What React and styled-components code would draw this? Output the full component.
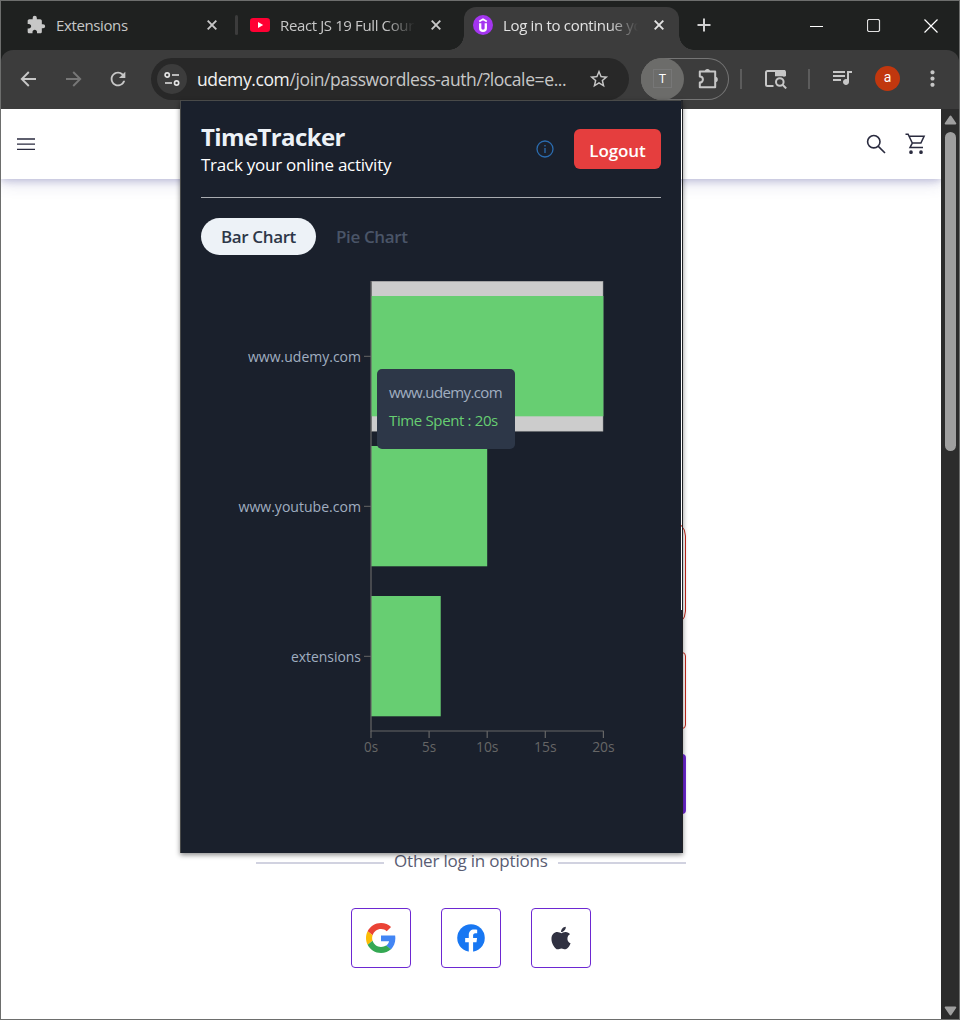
import React from "react";
import styled, { createGlobalStyle } from "styled-components";
import { MdExtension, MdStarBorder, MdRefresh, MdQueueMusic, MdMoreVert } from "react-icons/md";
import { FaApple } from "react-icons/fa";

const GlobalStyle = createGlobalStyle`
  * { box-sizing: border-box; }
  body { margin: 0; font-family: "Open Sans", "Noto Sans", sans-serif; font-stretch: 92%; }
  button { font: inherit; border: 0; padding: 0; background: none; }
  svg { display: block; flex: none; }
`;

const Window = styled.div`
  position: relative;
  width: 960px;
  height: 1020px;
  border: 1px solid #6d6e6d;
  background: #1f2120;
  display: flex;
  flex-direction: column;
  overflow: hidden;
`;

/* ---------- Tab strip ---------- */
const TabStrip = styled.div`
  display: flex;
  align-items: flex-end;
  height: 49px;
  flex: none;
`;

const Tab = styled.div`
  position: relative;
  display: flex;
  align-items: center;
  height: 43px;
  width: ${(p) => p.$width}px;
  padding: 0 ${(p) => p.$right}px 8px ${(p) => p.$left}px;
  color: ${(p) => (p.$active ? "#e3e3e3" : "#c7c7c7")};
  background: ${(p) => (p.$active ? "#3c3c3c" : "transparent")};
  border-radius: 12px 12px 0 0;
`;

const TabFoot = styled.i`
  position: absolute;
  bottom: 0;
  width: 15px;
  height: 15px;
  ${(p) => (p.$side === "left" ? "left: -15px;" : "right: -15px;")}
  background: radial-gradient(circle at ${(p) => (p.$side === "left" ? "0 0" : "100% 0")}, transparent 14.5px, #3c3c3c 15px);
`;

const TabTitle = styled.span`
  flex: 1;
  margin: 0 ${(p) => (p.$fade ? 16 : 0)}px 0 ${(p) => p.$gap}px;
  font-size: 15px;
  letter-spacing: ${(p) => p.$track || -0.4}px;
  line-height: 20px;
  white-space: nowrap;
  overflow: hidden;
  ${(p) => p.$fade && "mask-image: linear-gradient(90deg, #000 78%, transparent 100%);"}
`;

const TabDivider = styled.i`
  width: 3px;
  height: 20px;
  margin-bottom: 15px;
  border-radius: 2px;
  background: #3c3c3c;
`;

const NewTab = styled.div`
  height: 43px;
  margin-left: 18px;
  padding-top: 11px;
`;

const WindowControls = styled.div`
  display: flex;
  align-items: center;
  gap: 43px;
  margin-left: auto;
  padding: 0 21px 17px 0;
`;

/* ---------- Toolbar ---------- */
const Toolbar = styled.div`
  display: flex;
  align-items: center;
  height: 59px;
  flex: none;
  padding: 0 0 2px 18px;
  background: #3c3c3c;
  border-radius: 12px 12px 0 0;
  color: #c7c7c7;
  & > * { flex-shrink: 0; }
`;

const NavIcons = styled.div`
  display: flex;
  align-items: center;
  gap: 24px;
  width: 132px;
`;

const Omnibox = styled.div`
  display: flex;
  align-items: center;
  width: 478px;
  height: 42px;
  padding: 0 19px 0 6px;
  border-radius: 21px;
  background: #282828;
`;

const SiteChip = styled.div`
  display: grid;
  place-items: center;
  width: 30px;
  height: 30px;
  border-radius: 50%;
  background: #3c3c3c;
`;

const Url = styled.span`
  flex: 1;
  margin-left: 10px;
  font-size: 17.5px;
  letter-spacing: -0.39px;
  white-space: nowrap;
  color: #c7c7c7;
  b { font-weight: 400; color: #f1f1f1; }
`;

const ExtensionPill = styled.div`
  display: flex;
  align-items: center;
  width: 88px;
  height: 42px;
  margin-left: 12px;
  border-radius: 21px;
  box-shadow: inset 0 0 0 1px #757575;
`;

const ActiveExtension = styled.div`
  display: grid;
  place-items: center;
  width: 43px;
  height: 42px;
  margin-right: 14px;
  border-radius: 50%;
  background: #6c6c6a;
`;

const LetterTile = styled.span`
  display: grid;
  place-items: center;
  width: 19px;
  height: 19px;
  border: 1px solid #777;
  font-family: "Liberation Sans", sans-serif;
  font-size: 12px;
  color: #fff;
`;

const ToolbarDivider = styled.i`
  width: 2px;
  height: 20px;
  margin-left: ${(p) => p.$gap}px;
  background: #5c5c5c;
`;

const IconSlot = styled.span`
  margin-left: ${(p) => p.$left}px;
  padding-bottom: ${(p) => p.$lift || 0}px;
`;

const Avatar = styled.div`
  width: 25px;
  height: 25px;
  margin: 0 20px 0 21px;
  border-radius: 50%;
  background: #c1370e;
  color: #fff;
  font: 14px/23px Roboto, sans-serif;
  text-align: center;
`;

/* ---------- Web page ---------- */
const Viewport = styled.div`
  display: flex;
  flex: 1;
  background: #fff;
`;

const Site = styled.main`
  flex: 1;
  display: flex;
  flex-direction: column;
  overflow: hidden;
`;

const SiteHeader = styled.header`
  display: flex;
  align-items: center;
  gap: 19px;
  height: 70px;
  flex: none;
  padding: 0 15px 0 16px;
  background: #fff;
  color: #2a2b3f;
  box-shadow: 0 2px 7px rgba(60, 60, 140, 0.25), 0 5px 15px rgba(60, 60, 140, 0.14);
  svg:first-child { margin-right: auto; }
`;

const LoginForm = styled.section`
  display: flex;
  flex-direction: column;
  width: 430px;
  margin: 341px 0 0 255px;
  & > * { flex-shrink: 0; }
`;

const ErrorBox = styled.div`
  height: 107px;
  border: 1px solid #c5281c;
  border-radius: 16px;
`;

const Field = styled.div`
  height: 77px;
  margin-top: 25px;
  border: 1px solid #c5281c;
  border-radius: 4px;
`;

const Submit = styled.div`
  height: 60px;
  margin-top: 25px;
  border-radius: 4px;
  background: #6d28d2;
`;

const OptionsRule = styled.div`
  display: flex;
  align-items: center;
  gap: 10px;
  height: 24px;
  margin-top: 37px;
  color: #595c73;
  font-size: 17px;
  white-space: nowrap;
  &::before, &::after { content: ""; flex: 1; height: 2px; background: #d1d2e0; }
  span { width: 154px; margin-top: -6px; letter-spacing: -0.2px; }
`;

const Providers = styled.div`
  display: flex;
  justify-content: center;
  gap: 30px;
  margin-top: 33px;
`;

const Provider = styled.button`
  display: grid;
  place-items: center;
  width: 60px;
  height: 60px;
  border: 1px solid #6d28d2;
  border-radius: 4px;
  color: #303141;
`;

const Scrollbar = styled.aside`
  display: flex;
  flex-direction: column;
  align-items: center;
  width: 18px;
  padding: 6px 0 3px 1px;
  background: #2c2c2c;
`;

const Thumb = styled.div`
  width: 11px;
  height: 319px;
  margin: 7px 0 auto;
  border-radius: 6px;
  background: #9f9f9f;
`;

/* ---------- Extension popup ---------- */
const Popup = styled.div`
  position: absolute;
  left: 179px;
  top: 99px;
  display: flex;
  width: 503px;
  height: 753px;
  box-shadow: 0 2px 5px rgba(0, 0, 0, 0.45);
`;

const PopupPanel = styled.section`
  display: flex;
  flex-direction: column;
  width: 501px;
  padding: 20px;
  border: solid #494a49;
  border-width: 1px 0 0 1px;
  background: #1a202c;
  color: #edf2f7;
`;

const PopupEdge = styled.div`
  width: 2px;
  border-right: 1px solid #202125;
  border-top: 9px solid #26282c;
  display: flex;
  align-items: flex-end;
  &::after { content: ""; flex: 1; height: 243px; background: #1a202c; }
`;

const PopupHeader = styled.header`
  display: flex;
  align-items: center;
  height: 77px;
  padding-bottom: 21px;
  border-bottom: 1px solid #a9acb1;
`;

const Heading = styled.div`
  flex: 1;
  h1 { margin: 2px 0 0; font-size: 24px; line-height: 30px; letter-spacing: -0.62px; font-weight: 700; }
  p { margin: 0; font-size: 17px; line-height: 26px; letter-spacing: -0.25px; white-space: nowrap; color: #fff; }
`;

const Logout = styled.button`
  width: 87px;
  height: 40px;
  margin-left: 20px;
  border-radius: 6px;
  background: #e53e3e;
  color: #fff;
  font-size: 17px;
  font-weight: 600;
  letter-spacing: -0.1px;
  padding-top: 4px;
`;

const ChartTabs = styled.nav`
  display: flex;
  margin: 20px 0 26px;
`;

const ChartTab = styled.button`
  height: 37px;
  padding: 0 20px;
  border-radius: 19px;
  font-size: 17px;
  font-weight: 600;
  white-space: nowrap;
  letter-spacing: -0.38px;
  width: ${(p) => p.$width}px;
  background: ${(p) => (p.$active ? "#edf2f7" : "transparent")};
  color: ${(p) => (p.$active ? "#2d3748" : "#4a5568")};
`;

const ChartArea = styled.div`
  position: relative;
  text { font-size: 15px; }
`;

const Tooltip = styled.div`
  position: absolute;
  left: 176px;
  top: 88px;
  width: 138px;
  height: 80px;
  padding: 9px 12px;
  border-radius: 5px;
  background: #2d3748;
  color: #a0aec0;
  font-size: 15px;
  line-height: 28px;
  white-space: nowrap;
  p { margin: 0; letter-spacing: -0.62px; }
  p + p { color: #67ce72; letter-spacing: -0.36px; }
`;

/* ---------- Drawings ---------- */
const Stroke = ({ w, h = w, d, width = 2, ...rest }) => (
  <svg width={w} height={h} viewBox={`0 0 ${w} ${h}`} fill="none" stroke="currentColor" strokeWidth={width} {...rest}>
    <path d={d} />
  </svg>
);

const CloseIcon = () => <Stroke w={10} d="M.7.7l8.6 8.6M9.3.7L.7 9.3" width={1.9} />;

const YouTube = () => (
  <svg width="20" height="14" viewBox="0 0 20 14">
    <rect width="20" height="14" rx="3.2" fill="#ff0033" />
    <path d="M8 4l5.2 3L8 10z" fill="#fff" />
  </svg>
);

const Udemy = () => (
  <svg width="20" height="20" viewBox="0 0 20 20" fill="none" stroke="#fff">
    <circle cx="10" cy="10" r="10" fill="#a435f0" stroke="none" />
    <path d="M6.2 6.4L10 4.2l3.8 2.2" strokeWidth="1.7" />
    <path d="M7.2 8.2v5a2.8 2.6 0 0 0 5.6 0v-5" strokeWidth="2.3" />
  </svg>
);

const TuneIcon = () => (
  <svg width="16" height="14" viewBox="0 0 16 14" fill="none" stroke="#e3e3e3" strokeWidth="1.7">
    <circle cx="3.2" cy="3" r="2.1" />
    <path d="M8 3h7M1 11h7" />
    <circle cx="12.6" cy="11" r="2.1" />
  </svg>
);

const PuzzleOutline = () => (
  <svg width="22" height="22" viewBox="0 0 22 22" fill="none" stroke="currentColor" strokeWidth="2" strokeLinejoin="round">
    <path d="M1.8 3.6h15.4v15.6H1.8v-4.6a3.1 3.1 0 0 0 0-6.2z" />
    <path d="M6.8 3.6a2.6 2.6 0 0 1 5.2 0zM17.2 8.8a2.6 2.6 0 0 1 0 5.2z" fill="currentColor" stroke="none" />
  </svg>
);

const SidePanelSearch = () => (
  <svg width="23" height="20" viewBox="0 0 23 20" fill="none" stroke="currentColor" strokeWidth="2">
    <path d="M9.5 17H3.5A1.5 1.5 0 0 1 2 15.5v-12A1.5 1.5 0 0 1 3.5 2H20v5.5" />
    <path d="M11 1h9a2 2 0 0 1 2 2v4.2H11z" fill="currentColor" stroke="none" />
    <circle cx="15.8" cy="13" r="3.8" />
    <path d="M18.6 15.8l3.6 3.6" />
  </svg>
);

const Google = () => (
  <svg width="30" height="30" viewBox="0 0 48 48">
    <path fill="#EA4335" d="M24 9.5c3.54 0 6.71 1.22 9.21 3.6l6.85-6.85C35.9 2.38 30.47 0 24 0 14.62 0 6.51 5.38 2.56 13.22l7.98 6.19C12.43 13.72 17.74 9.5 24 9.5z" />
    <path fill="#4285F4" d="M46.98 24.55c0-1.57-.15-3.09-.38-4.55H24v9.02h12.94c-.58 2.96-2.26 5.48-4.78 7.18l7.73 6c4.51-4.18 7.09-10.36 7.09-17.65z" />
    <path fill="#FBBC05" d="M10.53 28.59c-.48-1.45-.76-2.99-.76-4.59s.27-3.14.76-4.59l-7.98-6.19C.92 16.46 0 20.12 0 24c0 3.88.92 7.54 2.56 10.78l7.97-6.19z" />
    <path fill="#34A853" d="M24 48c6.48 0 11.93-2.13 15.89-5.81l-7.73-6c-2.15 1.45-4.92 2.3-8.16 2.3-6.26 0-11.57-4.22-13.47-9.91l-7.98 6.19C6.51 42.62 14.62 48 24 48z" />
  </svg>
);

const Facebook = () => (
  <svg width="28" height="28" viewBox="0 0 24 24">
    <circle cx="12" cy="12" r="11.8" fill="#1877f2" />
    <path fill="#fff" d="M10.1 24v-8.4H7v-3.5h3.1V9.4c0-3 1.8-4.7 4.5-4.7 1.3 0 2.7.2 2.7.2v3h-1.5c-1.5 0-2 .9-2 1.9v2.3h3.4l-.5 3.5h-2.9V24z" />
  </svg>
);

const CartIcon = () => (
  <svg width="21" height="22" viewBox="0 0 21 22" fill="none" stroke="currentColor" strokeWidth="1.5">
    <path d="M.5 1.2h2.6l4.2 8.9h8.6l3.2-6.8H4.2M7.3 10.1l-2.3 4.5h13" />
    <circle cx="6" cy="19.2" r="1.1" fill="currentColor" />
    <circle cx="16" cy="19.2" r="1.1" fill="currentColor" />
  </svg>
);

const BARS = [
  { site: "www.udemy.com", seconds: 20, y: 15, label: 113 },
  { site: "www.youtube.com", seconds: 10, y: 165, label: 122.5 },
  { site: "extensions", seconds: 6, y: 315, label: 70 },
];
const TICKS = [0, 5, 10, 15, 20];
const SCALE = 232.4 / 20;

const BarChart = () => (
  <svg width="460" height="500" viewBox="0 0 460 500">
    <rect x="170.5" y="0.2" width="231.5" height="150" fill="#ccc" stroke="#9a9a9a" strokeWidth="0.5" />
    {BARS.map((b) => (
      <g key={b.site}>
        <rect x="170" y={b.y} width={b.seconds * SCALE} height="120.3" fill="#67ce72" />
        <path d={`M163 ${b.y + 60.3}h7`} stroke="#666" />
        <text x="160" y={b.y + 66} textAnchor="end" textLength={b.label} lengthAdjust="spacingAndGlyphs" fill="#a0aec0">{b.site}</text>
      </g>
    ))}
    <path d="M170 0v450h232.7" fill="none" stroke="#666" strokeWidth="1.2" />
    {TICKS.map((t) => (
      <g key={t}>
        <path d={`M${170 + t * SCALE} 450v7`} stroke="#666" strokeWidth="1.2" />
        <text x={170 + t * SCALE} y="471" textAnchor="middle" textLength={t < 10 ? 14 : 22.5} lengthAdjust="spacingAndGlyphs" fill="#666">{t}s</text>
      </g>
    ))}
  </svg>
);

export default function App() {
  return (
    <Window>
      <GlobalStyle />
      <TabStrip>
        <Tab $width={234} $left={25} $right={18}>
          <MdExtension size={20} />
          <TabTitle $gap={10} $track={-0.38}>Extensions</TabTitle>
          <CloseIcon />
        </Tab>
        <TabDivider />
        <Tab $width={226} $left={12} $right={23}>
          <YouTube />
          <TabTitle $gap={10} $track={-0.38} $fade>React JS 19 Full Course</TabTitle>
          <CloseIcon />
        </Tab>
        <Tab $active $width={215} $left={9} $right={15}>
          <TabFoot $side="left" />
          <Udemy />
          <TabTitle $gap={10} $track={-0.32} $fade>Log in to continue your</TabTitle>
          <CloseIcon />
          <TabFoot $side="right" />
        </Tab>
        <NewTab><Stroke w={14} d="M7 .5v13M.5 7h13" width={2} color="#d0d0d0" /></NewTab>
        <WindowControls>
          <Stroke w={14} d="M0 7.5h13" width={1} color="#fff" />
          <Stroke w={14} d="M1.5.5h10l1 1v10l-1 1h-10l-1-1v-10z" width={1.2} color="#e0e0e0" />
          <Stroke w={14} d="M.5.5l13 13M13.5.5l-13 13" width={1.2} color="#fff" />
        </WindowControls>
      </TabStrip>

      <Toolbar>
        <NavIcons>
          <Stroke w={20} d="M17 10H3M9.8 3L2.8 10l7 7" width={1.9} />
          <Stroke w={20} d="M3 10h14M10.2 3l7 7-7 7" width={1.9} color="#777" />
          <MdRefresh size={22} />
        </NavIcons>
        <Omnibox>
          <SiteChip><TuneIcon /></SiteChip>
          <Url><b>udemy.com</b>/join/passwordless-auth/?locale=e...</Url>
          <MdStarBorder size={22} />
        </Omnibox>
        <ExtensionPill>
          <ActiveExtension><LetterTile>T</LetterTile></ActiveExtension>
          <PuzzleOutline />
        </ExtensionPill>
        <ToolbarDivider $gap={11} />
        <IconSlot $left={22}><SidePanelSearch /></IconSlot>
        <ToolbarDivider $gap={21} />
        <IconSlot $left={20} $lift={4}><MdQueueMusic size={24} /></IconSlot>
        <Avatar>a</Avatar>
        <MdMoreVert size={25} />
      </Toolbar>

      <Viewport>
        <Site>
          <SiteHeader>
            <Stroke w={18} h={14} d="M0 2h18M0 7.2h18M0 12.4h18" width={1.3} />
            <Stroke w={20} d="M12.6 12.6L19 19M14 7.7A6.2 6.2 0 1 1 1.6 7.7a6.2 6.2 0 0 1 12.4 0z" width={1.6} />
            <CartIcon />
          </SiteHeader>
          <LoginForm>
            <ErrorBox />
            <Field />
            <Submit />
            <OptionsRule><span>Other log in options</span></OptionsRule>
            <Providers>
              <Provider><Google /></Provider>
              <Provider><Facebook /></Provider>
              <Provider><FaApple size={26} /></Provider>
            </Providers>
          </LoginForm>
        </Site>
        <Scrollbar>
          <svg width="13" height="10" viewBox="0 0 13 10"><path d="M6.5 1.5l4.8 7H1.7z" fill="#9f9f9f" stroke="#9f9f9f" strokeWidth="2" strokeLinejoin="round" /></svg>
          <Thumb />
          <svg width="13" height="10" viewBox="0 0 13 10"><path d="M6.5 8.5l4.8-7H1.7z" fill="#9f9f9f" stroke="#9f9f9f" strokeWidth="2" strokeLinejoin="round" /></svg>
        </Scrollbar>
      </Viewport>

      <Popup>
        <PopupPanel>
          <PopupHeader>
            <Heading>
              <h1>TimeTracker</h1>
              <p>Track your online activity</p>
            </Heading>
            <svg width="18" height="18" viewBox="0 0 18 18" fill="none" stroke="#2b6cb0" strokeWidth="1.3">
              <circle cx="9" cy="9" r="8" />
              <path d="M9 8v5M9 5v1.5" />
            </svg>
            <Logout>Logout</Logout>
          </PopupHeader>
          <ChartTabs>
            <ChartTab $active $width={115}>Bar Chart</ChartTab>
            <ChartTab>Pie Chart</ChartTab>
          </ChartTabs>
          <ChartArea>
            <BarChart />
            <Tooltip>
              <p>www.udemy.com</p>
              <p>Time Spent : 20s</p>
            </Tooltip>
          </ChartArea>
        </PopupPanel>
        <PopupEdge />
      </Popup>
    </Window>
  );
}
